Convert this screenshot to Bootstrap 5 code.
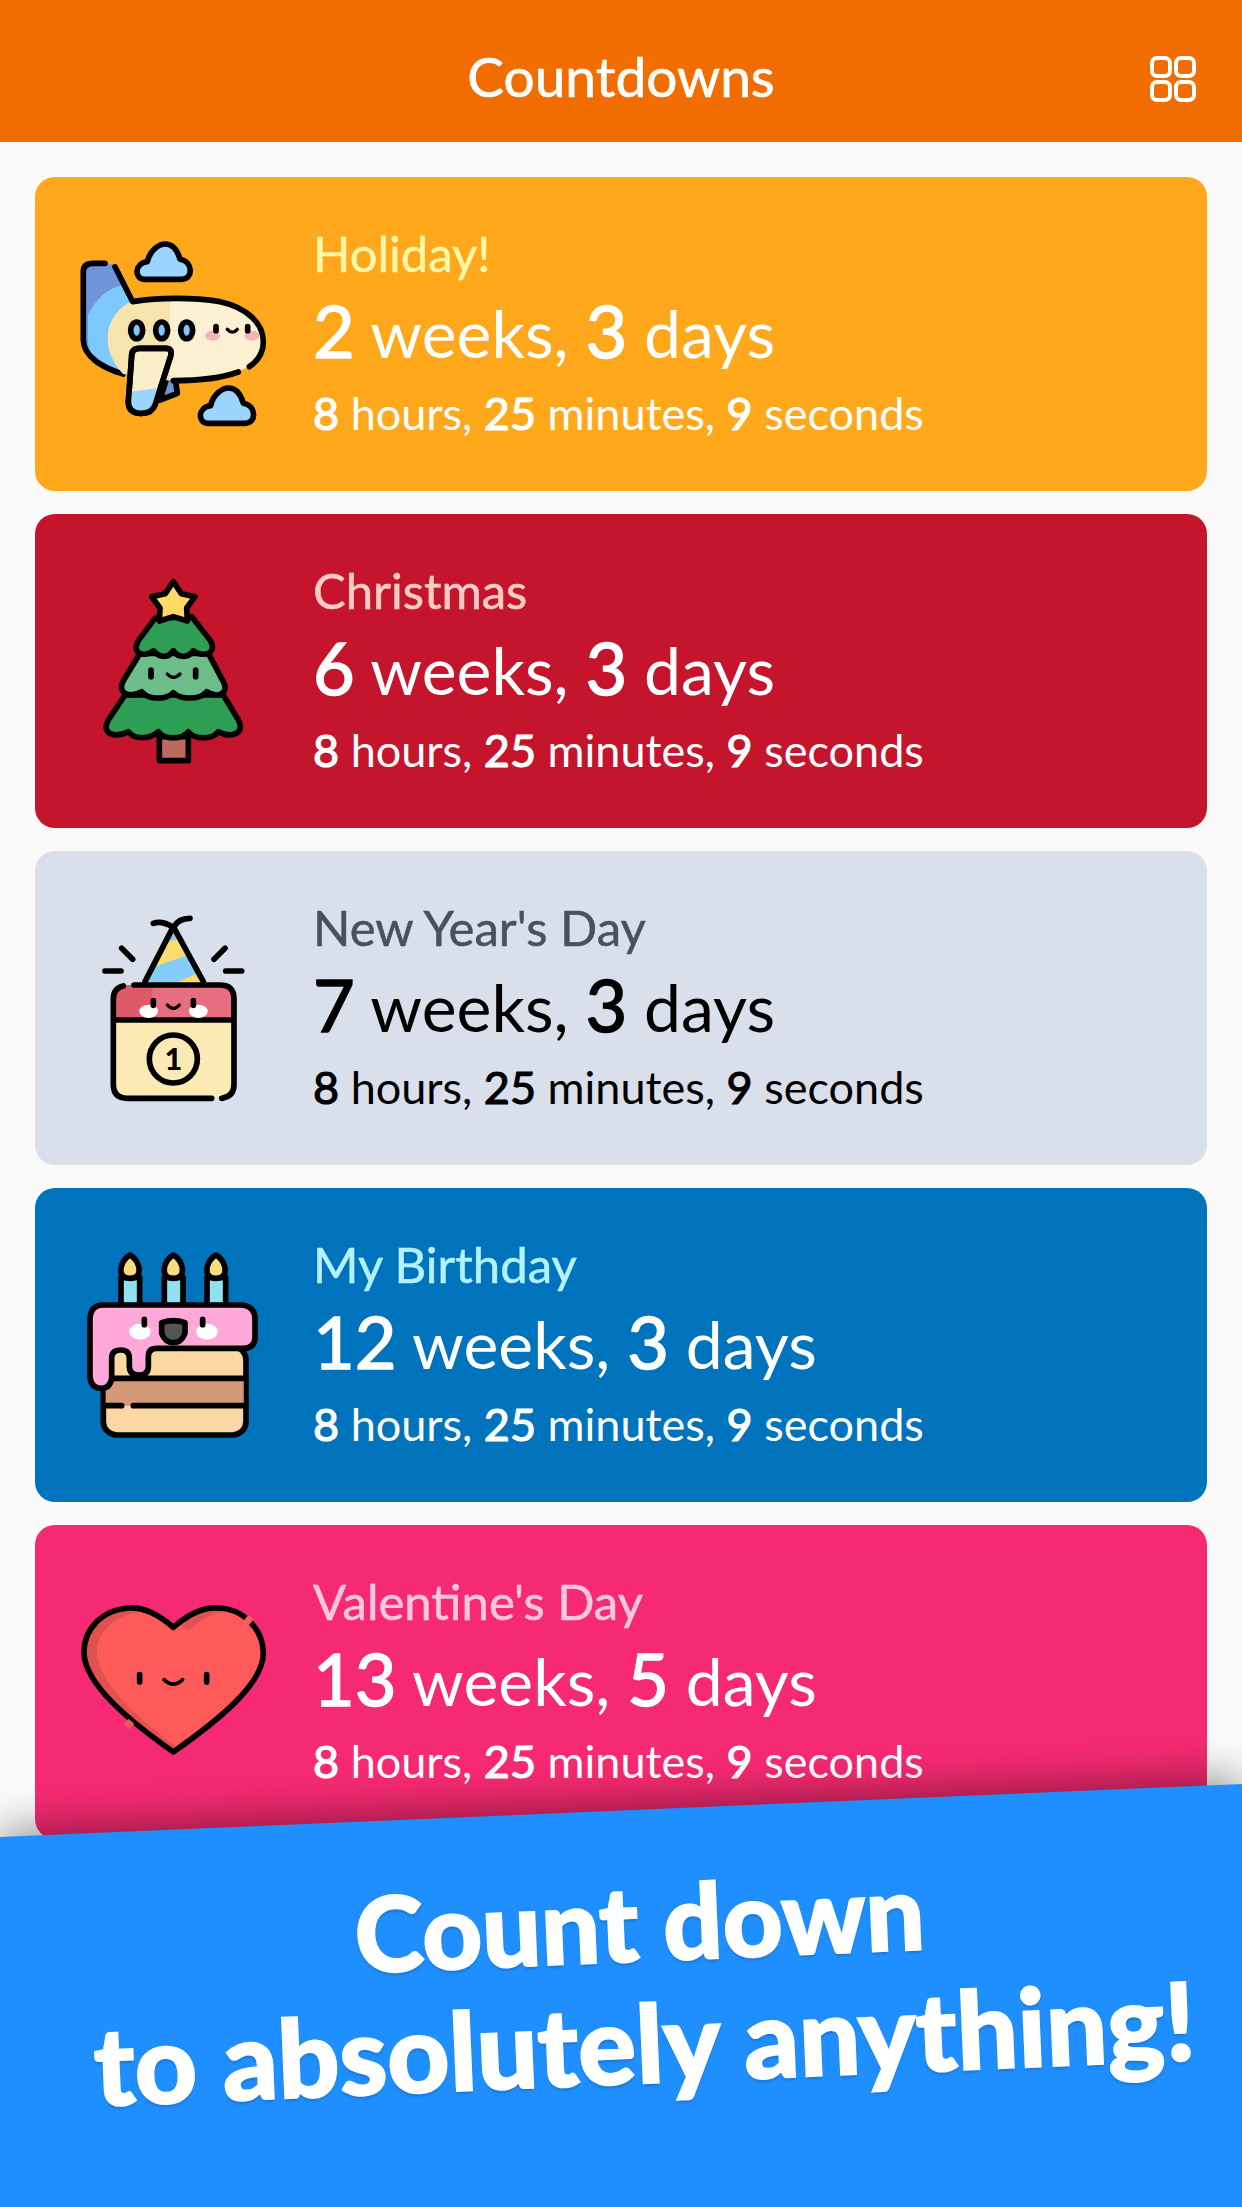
<!DOCTYPE html>
<html lang="en">

<head>
  <meta charset="UTF-8" />
  <meta name="viewport" content="width=device-width, initial-scale=1" />
  <title>Countdowns</title>
  <link href="https://cdn.jsdelivr.net/npm/bootstrap@5.3.0/dist/css/bootstrap.min.css" rel="stylesheet" />
  <style>
    body {
      background-color: #fafafa;
      font-family: Lato, "Noto Sans", sans-serif;
    }

    .screen {
      position: relative;
      height: 2207px;
      overflow: hidden;
    }

    .app-bar {
      height: 142px;
      padding: 10px 46px 0;
      background-color: #f26d00;
      color: #fff;
      font-size: 55px;
      -webkit-text-stroke: .7px #fff;
    }

    .app-bar-side {
      width: 46px;
      height: 46px;
    }

    svg.app-bar-side {
      margin-top: 6px;
    }

    .count-list {
      padding: 35px 35px 0;
      gap: 23px;
    }

    .count-item {
      height: 314px;
      padding-left: 25px;
      border: 0;
      border-radius: 20px;
      flex-direction: row;
      align-items: center;
      color: #fff;
    }

    .count-icon {
      width: 220px;
      height: 220px;
      margin-right: 33px;
      flex-shrink: 0;
    }

    .count-title {
      font-size: 49px;
      line-height: 60px;
      margin-top: -4px;
      -webkit-text-stroke: .5px currentColor;
    }

    .count-main {
      font-size: 66px;
      line-height: 88px;
      margin-top: 3px;
    }

    .count-main b {
      font-size: 72px;
      font-weight: 400;
      -webkit-text-stroke: 1.5px currentColor;
    }

    .count-rest {
      font-size: 45px;
      line-height: 58px;
      margin-top: 7px;
    }

    .count-rest b {
      font-weight: 400;
      -webkit-text-stroke: 1.2px currentColor;
    }

    .bg-holiday { background-color: #ffa81c; }
    .bg-holiday .count-title { color: #fff7a6; }
    .bg-xmas { background-color: #c4152d; }
    .bg-xmas .count-title { color: #ffcdc4; }
    .bg-newyear { background-color: #d9e0ec; color: #000; }
    .bg-newyear .count-title { color: #4a505c; }
    .bg-birthday { background-color: #0073bd; }
    .bg-birthday .count-title { color: #b4f1fb; }
    .bg-valentine { background-color: #f62a72; }
    .bg-valentine .count-title { color: #ffc6df; }

    /* slanted promo strip over the bottom of the list */
    .promo-wrap {
      position: absolute;
      left: 0;
      right: 0;
      bottom: 0;
      height: 423px;
      filter: drop-shadow(0 -5px 22px rgba(0, 0, 0, .45));
    }

    .promo {
      height: 100%;
      padding-top: 78px;
      background-color: #1f8fff;
      clip-path: polygon(0 53px, 100% 0, 100% 100%, 0 100%);
      color: #fff;
      font-weight: 900;
      font-size: 104px;
      line-height: 120px;
      text-align: center;
    }

    .promo-text {
      padding-left: 42px;
      transform: rotate(-2.4deg);
      -webkit-text-stroke: 2px #fff;
      text-shadow: 0 3px 3px rgba(0, 0, 0, .18);
    }

    .promo-line-long {
      font-size: 108px;
    }
  </style>
</head>

<body>
  <div class="screen">
    <nav class="app-bar d-flex align-items-center justify-content-between">
      <div class="app-bar-side"></div>
      <div>Countdowns</div>
      <svg class="app-bar-side" viewBox="0 0 46 46" fill="none" stroke="#fff" stroke-width="4">
        <rect x="2" y="2" width="18" height="18" rx="5" />
        <rect x="26" y="2" width="18" height="18" rx="5" />
        <rect x="2" y="26" width="18" height="18" rx="5" />
        <rect x="26" y="26" width="18" height="18" rx="5" />
      </svg>
    </nav>

    <div class="count-list d-flex flex-column">

      <div class="card count-item bg-holiday">
        <svg class="count-icon" viewBox="0 12 660 660" stroke="#000" stroke-width="17" stroke-linecap="round" stroke-linejoin="round">
          <!-- far wing -->
          <path d="M320 475 L345 470 L352 520 L300 540 Z" fill="#6f95d8" />
          <!-- tail fin -->
          <path d="M165 135 L218 245 L190 462 C130 440 70 410 70 360 V155 Q70 130 100 130 H135" fill="#6f95d8" stroke="none" />
          <path d="M84 285 C110 230 150 200 195 195 L218 245 L190 462 C130 440 84 410 84 360 Z" fill="#7cc8ff" stroke="none" />
          <path d="M135 130 H100 Q70 130 70 155 V360 C70 410 130 445 190 462" fill="none" />
          <path d="M165 140 L218 245" fill="none" />
          <!-- body -->
          <path d="M218 245 C300 232 400 232 480 245 C560 262 610 310 610 365 C610 400 590 425 565 440 C510 470 430 482 340 482 L190 462 C150 420 135 370 148 320 C160 285 185 255 218 245 Z" fill="#fcf0d2" stroke="none" />
          <path d="M218 245 C260 238 300 236 330 236 V482 L190 462 C150 420 135 370 148 320 C160 285 185 255 218 245 Z" fill="#f6e4ae" stroke="none" />
          <path d="M218 245 C300 232 400 232 480 245 C560 262 610 310 610 365 C610 400 590 425 568 440" fill="none" />
          <path d="M535 456 C480 476 410 482 340 482" fill="none" />
          <!-- windows -->
          <ellipse cx="230" cy="331" rx="18" ry="25" fill="#7cc8ff" />
          <ellipse cx="305" cy="331" rx="18" ry="25" fill="#7cc8ff" />
          <ellipse cx="380" cy="331" rx="18" ry="25" fill="#7cc8ff" />
          <!-- face -->
          <ellipse cx="458" cy="347" rx="22" ry="15" fill="#f6b2b7" stroke="none" />
          <ellipse cx="576" cy="347" rx="22" ry="15" fill="#f6b2b7" stroke="none" />
          <path d="M468 320 V332 M563 320 V332" fill="none" />
          <path d="M502 328 Q517 345 532 328" fill="none" stroke-width="10" />
          <!-- near wing -->
          <path d="M215 408 Q215 385 238 385 H318 Q338 385 332 408 L285 555 Q275 582 240 580 Q205 578 205 545 Z" fill="#fbeecb" />
          <path d="M209 515 L303 503 L285 555 Q275 582 240 580 Q205 578 205 545 Z" fill="#9ad4ff" stroke="none" />
          <path d="M215 408 Q215 385 238 385 H318 Q338 385 332 408 L285 555 Q275 582 240 580 Q205 578 205 545 Z" fill="none" />
          <!-- clouds -->
          <path d="M255 178 C222 178 222 130 262 125 C270 90 298 72 315 72 C345 72 355 100 360 118 C400 125 400 178 365 178 Z" fill="#9ad4ff" />
          <path d="M445 610 C412 610 412 562 452 557 C460 522 488 504 505 504 C535 504 545 532 550 550 C590 557 590 610 555 610 Z" fill="#9ad4ff" />
        </svg>
        <div>
          <div class="count-title">Holiday!</div>
          <div class="count-main"><b>2</b> weeks, <b>3</b> days</div>
          <div class="count-rest"><b>8</b> hours, <b>25</b> minutes, <b>9</b> seconds</div>
        </div>
      </div>

      <div class="card count-item bg-xmas">
        <svg class="count-icon" viewBox="0 3 660 660" stroke="#000" stroke-width="17" stroke-linecap="round" stroke-linejoin="round">
          <rect x="298" y="530" width="87" height="72" fill="#bc6a5f" />
          <!-- bottom tier -->
          <path d="M195 405 L145 480 C122 522 165 535 205 515 C225 540 270 538 295 515 C315 540 365 540 385 515 C405 540 455 540 475 515 C510 535 558 522 535 480 L490 405 Z" fill="#2e9e55" />
          <!-- middle tier -->
          <path d="M240 280 L190 362 C170 402 210 415 245 395 C265 420 320 420 340 398 C360 420 420 420 440 395 C470 415 510 402 490 365 L445 280 Z" fill="#6dbd8a" />
          <!-- top tier -->
          <path d="M285 175 L240 235 C208 280 250 295 280 272 C300 295 325 295 340 272 C355 295 385 295 400 272 C430 295 475 280 450 240 L395 170 Z" fill="#2e9e55" />
          <path d="M340 65 L364 101 L405 110 L380 144 L382 183 L340 170 L298 183 L300 144 L275 110 L316 101 Z" fill="#ffdb63" />
          <path d="M273 330 V350 M407 330 V350" fill="none" />
          <path d="M322 342 Q340 362 360 342" fill="none" stroke-width="10" />
        </svg>
        <div>
          <div class="count-title">Christmas</div>
          <div class="count-main"><b>6</b> weeks, <b>3</b> days</div>
          <div class="count-rest"><b>8</b> hours, <b>25</b> minutes, <b>9</b> seconds</div>
        </div>
      </div>

      <div class="card count-item bg-newyear">
        <svg class="count-icon" viewBox="0 -6 660 660" stroke="#000" stroke-width="17" stroke-linecap="round" stroke-linejoin="round">
          <clipPath id="hat-clip"><path d="M340 75 L255 248 H430 Z" /></clipPath>
          <path d="M340 75 L255 248 H430 Z" fill="#f9dc6c" stroke="none" />
          <g clip-path="url(#hat-clip)" stroke="none" fill="#83cdf6">
            <path d="M295 130 V70 H380 V112 Z" />
            <path d="M270 205 L385 165 L420 215 L345 250 H250 Z" />
          </g>
          <path d="M255 245 L340 80 L430 245" fill="none" />
          <path d="M280 70 Q305 60 340 82 Q355 55 390 55" fill="none" />
          <path d="M185 145 L218 178 M135 213 H183 M495 145 L462 178 M497 213 H545" fill="none" />
          <!-- calendar -->
          <rect x="160" y="255" width="362" height="340" rx="42" fill="#fbeab4" stroke="none" />
          <path d="M160 360 V297 Q160 255 202 255 H480 Q522 255 522 297 V360 Z" fill="#e0596b" stroke="none" />
          <path d="M280 255 H480 Q522 255 522 297 V360 H265 Z" fill="#e76d80" stroke="none" />
          <path d="M160 360 V553 Q160 595 202 595 H455 M485 595 Q522 590 522 553 V297 Q522 255 480 255 H222 M190 258 Q160 265 160 297 V360 H522" fill="none" />
          <ellipse cx="266" cy="334" rx="28" ry="20" fill="#fff" stroke="none" />
          <ellipse cx="415" cy="334" rx="28" ry="20" fill="#fff" stroke="none" />
          <path d="M280 302 V316 M400 302 V316" fill="none" />
          <path d="M322 315 Q340 335 358 315" fill="none" stroke-width="10" />
          <circle cx="340" cy="477" r="72" fill="none" />
          <text x="340" y="510" font-size="92" font-weight="900" text-anchor="middle" fill="#000" stroke="none">1</text>
        </svg>
        <div>
          <div class="count-title">New Year's Day</div>
          <div class="count-main"><b>7</b> weeks, <b>3</b> days</div>
          <div class="count-rest"><b>8</b> hours, <b>25</b> minutes, <b>9</b> seconds</div>
        </div>
      </div>

      <div class="card count-item bg-birthday">
        <svg class="count-icon" viewBox="0 -15 660 660" stroke="#000" stroke-width="17" stroke-linecap="round" stroke-linejoin="round">
          <!-- candles -->
          <rect x="183" y="112" width="56" height="85" fill="#8fe0f0" />
          <path d="M210 45 C235 60 240 85 236 100 Q230 115 210 115 Q190 115 184 100 C180 85 185 60 210 45 Z" fill="#f7dc7f" />
          <rect x="313" y="112" width="56" height="85" fill="#8fe0f0" />
          <path d="M340 45 C365 60 370 85 366 100 Q360 115 340 115 Q320 115 314 100 C310 85 315 60 340 45 Z" fill="#f7dc7f" />
          <rect x="441" y="112" width="56" height="85" fill="#8fe0f0" />
          <path d="M468 45 C493 60 498 85 494 100 Q488 115 468 115 Q448 115 442 100 C438 85 443 60 468 45 Z" fill="#f7dc7f" />
          <!-- sponge layers -->
          <rect x="130" y="320" width="428" height="265" rx="40" fill="#fad7a3" />
          <rect x="137" y="415" width="414" height="82" fill="#d49a77" stroke="none" />
          <path d="M137 415 H551 M137 497 H185 M220 497 H551" fill="none" />
          <!-- icing -->
          <path d="M130 195 H540 Q585 195 585 240 V290 Q585 325 550 325 H290 Q265 325 265 350 V380 Q265 405 235 405 Q210 405 208 380 V355 Q208 330 182 330 Q155 330 155 355 V415 Q150 445 125 445 Q92 445 90 410 V240 Q90 195 130 195 Z" fill="#ffa9da" />
          <ellipse cx="240" cy="275" rx="32" ry="24" fill="#fff" stroke="none" />
          <ellipse cx="441" cy="275" rx="32" ry="24" fill="#fff" stroke="none" />
          <path d="M253 238 V254 M428 238 V254" fill="none" />
          <path d="M305 248 Q340 236 375 248 L375 280 Q365 308 340 308 Q315 308 305 280 Z" fill="#555" />
        </svg>
        <div>
          <div class="count-title">My Birthday</div>
          <div class="count-main"><b>12</b> weeks, <b>3</b> days</div>
          <div class="count-rest"><b>8</b> hours, <b>25</b> minutes, <b>9</b> seconds</div>
        </div>
      </div>

      <div class="card count-item bg-valentine">
        <svg class="count-icon" viewBox="0 -18 660 660" stroke="#000" stroke-width="17" stroke-linecap="round" stroke-linejoin="round">
          <clipPath id="heart-clip"><path d="M340 148 C290 105 250 88 210 90 C120 95 70 160 72 225 C75 320 210 430 340 522 C470 430 610 320 610 225 C610 160 555 90 470 90 C430 88 390 105 340 148 Z" /></clipPath>
          <path d="M340 148 C290 105 250 88 210 90 C120 95 70 160 72 225 C75 320 210 430 340 522 C470 430 610 320 610 225 C610 160 555 90 470 90 C430 88 390 105 340 148 Z" fill="#e0524f" stroke="none" />
          <g clip-path="url(#heart-clip)">
            <path d="M385 158 C335 115 295 98 255 100 C165 105 100 170 112 235 C125 330 255 440 385 532 C515 440 655 330 655 235 C655 170 600 100 515 100 C475 98 435 115 385 158 Z" fill="#ff5a5a" stroke="none" />
          </g>
          <path d="M340 148 C290 105 250 88 210 90 C120 95 70 160 72 225 C75 320 210 430 340 522 C470 430 610 320 610 225 C610 160 555 90 470 90 C430 88 390 105 340 148 Z" fill="none" />
          <!-- small breaks in the outline -->
          <path d="M558 119 L574 133" fill="none" stroke="#ff5a5a" stroke-width="22" stroke-linecap="butt" />
          <path d="M198 431 L216 446" fill="none" stroke="#f0565a" stroke-width="22" stroke-linecap="butt" />
          <path d="M239 290 V312 M440 290 V312" fill="none" />
          <path d="M312 305 Q340 332 368 305" fill="none" stroke-width="11" />
        </svg>
        <div>
          <div class="count-title">Valentine's Day</div>
          <div class="count-main"><b>13</b> weeks, <b>5</b> days</div>
          <div class="count-rest"><b>8</b> hours, <b>25</b> minutes, <b>9</b> seconds</div>
        </div>
      </div>

    </div>

    <div class="promo-wrap">
      <div class="promo">
        <div class="promo-text">
          <div>Count down</div>
          <div class="promo-line-long">to absolutely anything!</div>
        </div>
      </div>
    </div>
  </div>

  <script src="https://cdn.jsdelivr.net/npm/bootstrap@5.3.0/dist/js/bootstrap.bundle.min.js"></script>
</body>

</html>
